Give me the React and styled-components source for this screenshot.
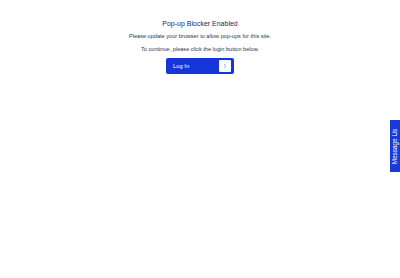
import React from "react";
import styled, { createGlobalStyle } from "styled-components";

const Global = createGlobalStyle`
  html, body { margin: 0; padding: 0; background: #fff; }
  body { font-family: "Liberation Sans", Arial, sans-serif; }
`;

const Page = styled.div`
  position: relative;
  width: 400px;
  height: 278px;
  overflow: hidden;
  background: #fff;
`;

const Content = styled.div`
  display: flex;
  flex-direction: column;
  align-items: center;
  padding-top: 19px;
`;

const Title = styled.h1`
  margin: 0;
  font-size: 7px;
  line-height: 9px;
  font-weight: 400;
  color: #1d2b5c;
`;

const Text = styled.p`
  margin: ${(p) => p.$mt || 0}px 0 0;
  font-size: 5.6px;
  line-height: 7px;
  color: #2b3550;
`;

const Button = styled.button`
  margin-top: 5px;
  width: 68px;
  height: 16px;
  box-sizing: border-box;
  border: none;
  border-radius: 2px;
  background: #1537d9;
  padding: 2px 3px 2px 7px;
  display: flex;
  align-items: center;
  justify-content: space-between;
  cursor: pointer;
`;

const Label = styled.span`
  font-family: "Liberation Sans", Arial, sans-serif;
  font-size: 5.8px;
  color: #fff;
`;

const Arrow = styled.span`
  width: 12px;
  height: 12px;
  background: #fff;
  border-radius: 1px;
  display: flex;
  align-items: center;
  justify-content: center;
`;

const Tab = styled.div`
  position: absolute;
  right: 0;
  top: 120px;
  width: 10px;
  height: 52px;
  background: #1a3ad6;
  display: flex;
  align-items: center;
  justify-content: center;
`;

const TabLabel = styled.span`
  transform: rotate(-90deg);
  white-space: nowrap;
  font-size: 6.4px;
  color: #fff;
`;

export default function App() {
  return (
    <Page>
      <Global />
      <Content>
        <Title>Pop-up Blocker Enabled</Title>
        <Text $mt={5}>Please update your browser to allow pop-ups for this site.</Text>
        <Text $mt={6}>To continue, please click the login button below.</Text>
        <Button>
          <Label>Log In</Label>
          <Arrow>
            <svg width="6" height="6" viewBox="0 0 6 6">
              <path d="M2 1 L4 3 L2 5" fill="none" stroke="#7d8fd8" strokeWidth="0.7" />
            </svg>
          </Arrow>
        </Button>
      </Content>
      <Tab>
        <TabLabel>Message Us</TabLabel>
      </Tab>
    </Page>
  );
}
